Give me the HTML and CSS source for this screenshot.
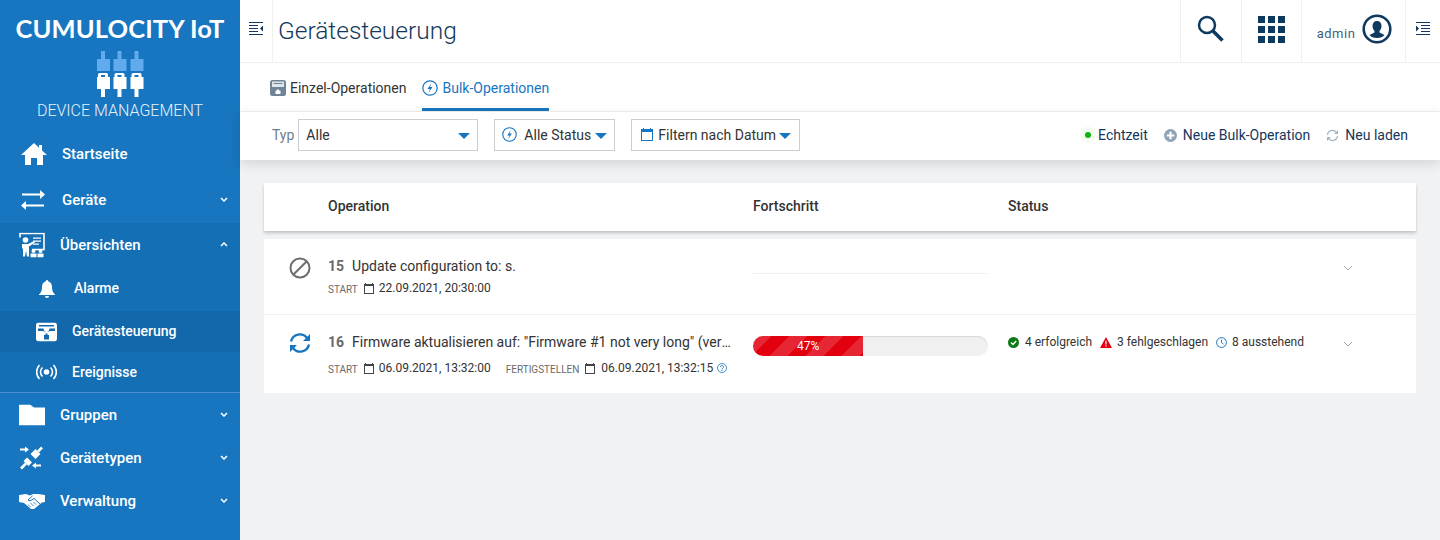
FILE: index.html
```html
<!DOCTYPE html>
<html lang="en">
<head>
    <meta charset="UTF-8">
    <title>Gerätesteuerung</title>
    <link rel="stylesheet" href="styles.css">
</head>
<body>
    <aside class="sidebar">
        <div class="brand">
            <div class="brand-name">CUMULOCITY IoT</div>
            <svg class="brand-icon" width="48" height="48" viewBox="0 0 48 48">
                <defs>
                    <g id="plug">
                        <path fill="#5fabee" d="M5 1h4v8h5v12H1V9h4z"/>
                        <path fill="#fff" fill-rule="evenodd" d="M3.500 23h7a1.500 1.500 0 0 1 1.500 1.500V27h2v12H9v8H5v-8H1V27h1v-2.500A1.500 1.500 0 0 1 3.500 23zM5 25v2h4v-2z"/>
                    </g>
                </defs>
                <use href="#plug"/>
                <use href="#plug" x="16.500"/>
                <use href="#plug" x="33.500"/>
            </svg>
            <div class="brand-sub">DEVICE MANAGEMENT</div>
        </div>
        <nav class="nav">
            <a class="nav-item nav-home">
                <svg class="nav-icon" width="26" height="24" viewBox="0 0 26 24"><path fill="#fff" d="M13 1 0 13h4v10h6v-7h6v7h6V13h4l-5-4.600V3h-3v2.800z"/></svg>
                <span>Startseite</span>
            </a>
            <a class="nav-item nav-home nav-devices">
                <svg class="nav-icon" width="24" height="21" viewBox="0 0 24 21"><path fill="#fff" d="M1 4h18V.500L24 5l-5 4.500V6H1zM23 15H5v-3.500L0 16l5 4.500V17h18z"/></svg>
                <span>Geräte</span>
                <svg class="chev" width="8" height="5" viewBox="0 0 8 5"><path fill="none" stroke="#fff" stroke-width="1.500" d="m1 1 3 3 3-3"/></svg>
            </a>
            <div class="nav-open">
                <a class="nav-item nav-head">
                    <svg class="nav-icon" width="26" height="25" viewBox="0 0 26 25"><path fill="none" stroke="#fff" stroke-width="1.600" d="M1 5V1h24v16H13"/><path fill="#fff" d="M14 5h8v1.200h-8zM14 8h8v1.200h-8zM14 11h6v1.200h-6z"/><circle cx="6.500" cy="7.500" r="2.800" fill="#fff"/><path fill="#fff" d="M3 11.500h6l6-3 1 1.500-6 4v10H8l-1-6-1 6H4v-8H3z"/><circle cx="14.500" cy="18.500" r="2" fill="#fff"/><circle cx="21.500" cy="18.500" r="2" fill="#fff"/><path fill="#fff" d="M11.500 21h6v4h-6zM18.500 21h6v4h-6z"/></svg>
                    <span>Übersichten</span>
                    <svg class="chev" width="8" height="5" viewBox="0 0 8 5"><path fill="none" stroke="#fff" stroke-width="1.500" d="m1 4 3-3 3 3"/></svg>
                </a>
                <a class="nav-sub nav-alarm">
                    <svg class="sub-icon" width="16" height="18" viewBox="0 0 16 18"><path fill="#fff" d="M8 0a1.500 1.500 0 0 1 1.400 1.500C12 2.300 13 4.500 13 7c0 4 1 5.500 3 7.500V15H0v-.5C2 12.500 3 11 3 7c0-2.500 1-4.700 3.600-5.500A1.500 1.500 0 0 1 8 0zM6 16h4a2 2 0 0 1-4 0z"/></svg>
                    <span>Alarme</span>
                </a>
                <a class="nav-sub nav-active">
                    <svg class="sub-icon" width="21" height="19" viewBox="0 0 21 19"><rect width="21" height="19" rx="3" fill="#fff"/><path fill="#1268ab" d="M3 2.500h15V4H3zM2 6h5.500a3 3 0 0 0 6 0H19v2.500h-5l-1 .5H8l-1-.5H2zM8 12.500h1.500v-1.500h2v1.500H13V17H8z"/></svg>
                    <span>Gerätesteuerung</span>
                </a>
                <a class="nav-sub nav-last">
                    <svg class="sub-icon" width="21" height="16" viewBox="0 0 21 16"><circle cx="10.500" cy="8" r="2.800" fill="#fff"/><g fill="none" stroke="#fff" stroke-width="1.600"><path d="M6.500 3.500a6 6 0 0 0 0 9M14.500 3.500a6 6 0 0 1 0 9M3.500 1a10 10 0 0 0 0 14M17.500 1a10 10 0 0 1 0 14"/></g></svg>
                    <span>Ereignisse</span>
                </a>
            </div>
            <a class="nav-item nav-head">
                <svg class="nav-icon" width="26" height="21" viewBox="0 0 26 21"><path fill="#fff" d="M0 0h11l4 3h11v18H0z"/></svg>
                <span>Gruppen</span>
                <svg class="chev" width="8" height="5" viewBox="0 0 8 5"><path fill="none" stroke="#fff" stroke-width="1.500" d="m1 1 3 3 3-3"/></svg>
            </a>
            <a class="nav-item nav-head">
                <svg class="nav-icon" width="25" height="25" viewBox="0 0 25 25"><g fill="none" stroke="#fff"><path stroke-width="7" d="M14 11l5-5M11 14l-4 4"/><path stroke-width="2.500" d="m19 6 4-4M7 18l-5 5"/><path stroke="#1776bf" stroke-width="1.200" d="m7 10 8 8"/></g><path fill="#fff" d="M1 3h5V1l4 3-4 3V5H1zM22 19h-5v-2l-4 3 4 3v-2h5z"/></svg>
                <span>Gerätetypen</span>
                <svg class="chev" width="8" height="5" viewBox="0 0 8 5"><path fill="none" stroke="#fff" stroke-width="1.500" d="m1 1 3 3 3-3"/></svg>
            </a>
            <a class="nav-item nav-head">
                <svg class="nav-icon" width="26" height="16" viewBox="0 0 26 16"><path fill="#fff" d="M0 2l7-1 4 1.500L14 1h5l7 1v7l-3 .5L15 16h-3L5 10l-5-1z"/><g fill="none" stroke="#1776bf"><path d="M13.500 3 9 7l2 1 4-2.500 6 5.500"/><path d="m9 11.500 2.500 2.500M11.500 10l3 3M14.500 9l2.500 2.500" stroke-width=".8"/></g></svg>
                <span>Verwaltung</span>
                <svg class="chev" width="8" height="5" viewBox="0 0 8 5"><path fill="none" stroke="#fff" stroke-width="1.500" d="m1 1 3 3 3-3"/></svg>
            </a>
        </nav>
    </aside>

    <main class="main">
        <header class="topbar">
            <div class="toggle toggle-left">
                <svg width="14" height="13" viewBox="0 0 14 13"><path fill="#14375b" d="M0 0h14v1H0zM0 3h9v1H0zM0 6h9v1H0zM0 9h9v1H0zM0 12h14v1H0zM14 3.500v6l-3-3z"/></svg>
            </div>
            <h1 class="title">Gerätesteuerung</h1>
            <div class="top-cell top-search">
                <svg width="27" height="27" viewBox="0 0 27 27"><circle cx="10" cy="10" r="8" fill="none" stroke="#0f3a5f" stroke-width="2.500"/><path stroke="#0f3a5f" stroke-width="3.500" d="m15.500 15.500 10 10"/></svg>
            </div>
            <div class="top-cell top-apps">
                <svg width="27" height="27" viewBox="0 0 27 27"><path fill="#0f3a5f" d="M0 0h7v7H0zM10 0h7v7h-7zM20 0h7v7h-7zM0 10h7v7H0zM10 10h7v7h-7zM20 10h7v7h-7zM0 20h7v7H0zM10 20h7v7h-7zM20 20h7v7h-7z"/></svg>
            </div>
            <div class="top-cell top-user">
                <span class="user-name">admin</span>
                <svg width="30" height="30" viewBox="0 0 30 30"><circle cx="15" cy="15" r="13.300" fill="none" stroke="#0f3a5f" stroke-width="2.600"/><path fill="#0f3a5f" d="M15 7c3 0 4.500 2 4.500 5 0 2-1 4-2 5v1.500l5 2.500c-1.500 2-4 3-7.500 3s-6-1-7.500-3l5-2.500V17c-1-1-2-3-2-5 0-3 1.500-5 4.500-5z"/></svg>
            </div>
            <div class="toggle toggle-right">
                <svg width="14" height="13" viewBox="0 0 14 13"><path fill="#14375b" d="M0 0h14v1H0zM5 3h9v1H5zM5 6h9v1H5zM5 9h9v1H5zM0 12h14v1H0zM0 3.500v6l3-3z"/></svg>
            </div>
        </header>

        <div class="tabs">
            <a class="tab">
                <svg width="16" height="16" viewBox="0 0 16 16"><rect width="16" height="16" rx="2.500" fill="#6f8496"/><path fill="#dfe5ea" d="M2 1.500h12V7H2z"/><path fill="#6f8496" d="M3.500 3h9v1h-9z"/><path fill="#6f8496" d="M5 7a3 3 0 0 0 6 0z"/><path fill="#fff" d="M5.500 10.500h1.500V9.500h2v1h1.500V14h-5z"/></svg>
                Einzel-Operationen
            </a>
            <a class="tab tab-active">
                <svg width="16" height="16" viewBox="0 0 16 16"><circle cx="8" cy="8" r="7.200" fill="none" stroke="#1776bf" stroke-width="1.200"/><path fill="#1776bf" d="m9.500 3-4 6h2.500l-1.500 4 4-6H8z"/></svg>
                Bulk-Operationen
            </a>
        </div>

        <div class="actionbar">
            <label class="type-label">Typ</label>
            <div class="select select-type">
                <span>Alle</span>
                <i class="caret"></i>
            </div>
            <div class="select select-status">
                <svg width="15" height="15" viewBox="0 0 16 16"><circle cx="8" cy="8" r="7.200" fill="none" stroke="#1776bf" stroke-width="1.200"/><path fill="#1776bf" d="m9.500 3-4 6h2.500l-1.500 4 4-6H8z"/></svg>
                <span>Alle Status</span>
                <i class="caret"></i>
            </div>
            <div class="select select-date">
                <svg width="12" height="13" viewBox="0 0 12 13"><path fill="#1776bf" fill-rule="evenodd" d="M2 0h1v1h6V0h1v1h2v12H0V1h2zM1 4v8h10V4z"/></svg>
                <span>Filtern nach Datum</span>
                <i class="caret"></i>
            </div>
            <div class="actions">
                <span class="action"><i class="live-dot"></i>Echtzeit</span>
                <span class="action">
                    <svg width="13" height="13" viewBox="0 0 12 12"><circle cx="6" cy="6" r="6" fill="#8fa3b5"/><path fill="#fff" d="M5 2.500h2V5h2.500v2H7v2.500H5V7H2.500V5H5z"/></svg>
                    Neue Bulk-Operation
                </span>
                <span class="action">
                    <svg width="13" height="13" viewBox="0 0 13 13"><path fill="none" stroke="#a5b4c0" stroke-width="1.200" d="M1.500 6A5 5 0 0 1 10.500 3.500M11.500 7A5 5 0 0 1 2.500 9.500"/><path fill="#a5b4c0" d="M12 1v4H8zM1 12V8h4z"/></svg>
                    Neu laden
                </span>
            </div>
        </div>

        <div class="content">
            <div class="table-head">
                <div class="col-op">Operation</div>
                <div class="col-progress">Fortschritt</div>
                <div class="col-status">Status</div>
            </div>
            <div class="rows">
                <div class="row row-first">
                    <svg class="row-icon" width="22" height="22" viewBox="0 0 22 22"><circle cx="11" cy="11" r="9.500" fill="none" stroke="#6d6d6d" stroke-width="2"/><path stroke="#6d6d6d" stroke-width="2" d="M4.500 17.500l13-13"/></svg>
                    <div class="col-op">
                        <div class="op-title"><b>15</b>Update configuration to: s.</div>
                        <div class="op-meta">
                            <small>START</small>
                            <svg class="cal" width="10" height="11" viewBox="0 0 10 11"><path fill="#444" fill-rule="evenodd" d="M1 0h1v1h6V0h1v1h1v10H0V1h1zM1 3v7h8V3z"/></svg>
                            <span>22.09.2021, 20:30:00</span>
                        </div>
                    </div>
                    <div class="col-progress"><div class="progress-empty"></div></div>
                    <div class="col-status"></div>
                    <svg class="row-chev" width="10" height="6" viewBox="0 0 10 6"><path fill="none" stroke="#98a8b6" d="m1 1 4 4 4-4"/></svg>
                </div>
                <div class="row row-second">
                    <svg class="row-icon" width="22" height="20" viewBox="0 0 22 20"><g fill="none" stroke="#1776bf" stroke-width="2.400"><path d="M2 8.500A9 9 0 0 1 18 5"/><path d="M20 11.500A9 9 0 0 1 4 15"/></g><path fill="#1776bf" d="M21 1v7h-7zM1 19v-7h7z"/></svg>
                    <div class="col-op">
                        <div class="op-title"><b>16</b><span class="op-name">Firmware aktualisieren auf: "Firmware #1 not very long" (version: 1.0.0)</span></div>
                        <div class="op-meta">
                            <small>START</small>
                            <svg class="cal" width="10" height="11" viewBox="0 0 10 11"><path fill="#444" fill-rule="evenodd" d="M1 0h1v1h6V0h1v1h1v10H0V1h1zM1 3v7h8V3z"/></svg>
                            <span>06.09.2021, 13:32:00</span>
                            <small class="meta-end">FERTIGSTELLEN</small>
                            <svg class="cal" width="10" height="11" viewBox="0 0 10 11"><path fill="#444" fill-rule="evenodd" d="M1 0h1v1h6V0h1v1h1v10H0V1h1zM1 3v7h8V3z"/></svg>
                            <span>06.09.2021, 13:32:15</span>
                            <svg class="help" width="10" height="10" viewBox="0 0 10 10"><circle cx="5" cy="5" r="4.500" fill="none" stroke="#1776bf" stroke-width=".8"/><path fill="none" stroke="#1776bf" stroke-width=".9" d="M3.500 4a1.500 1.500 0 1 1 2.200 1.300C5.200 5.600 5 5.800 5 6.500"/><circle cx="5" cy="7.600" r=".6" fill="#1776bf"/></svg>
                        </div>
                    </div>
                    <div class="col-progress">
                        <div class="progress">
                            <div class="progress-bar" style="width: 47%">47%</div>
                        </div>
                    </div>
                    <div class="col-status status-list">
                        <span class="stat stat-ok">
                            <svg width="11" height="11" viewBox="0 0 11 11"><circle cx="5.500" cy="5.500" r="5.500" fill="#0b7a16"/><path fill="none" stroke="#fff" stroke-width="1.400" d="m3 5.500 2 2 3.200-3.500"/></svg>
                            4 erfolgreich
                        </span>
                        <span class="stat">
                            <svg width="12" height="11" viewBox="0 0 12 11"><path fill="#e2000f" d="M6 0l6 11H0z"/><path fill="#fff" d="M5.400 3.800h1.200v3.800H5.400zM5.400 8.300h1.200v1.200H5.400z"/></svg>
                            3 fehlgeschlagen
                        </span>
                        <span class="stat">
                            <svg width="11" height="11" viewBox="0 0 11 11"><circle cx="5.500" cy="5.500" r="4.900" fill="none" stroke="#1776bf"/><path fill="none" stroke="#1776bf" stroke-width=".9" d="M5.500 2.500v3.200l2 1.300"/></svg>
                            8 ausstehend
                        </span>
                    </div>
                    <svg class="row-chev" width="10" height="6" viewBox="0 0 10 6"><path fill="none" stroke="#98a8b6" d="m1 1 4 4 4-4"/></svg>
                </div>
            </div>
        </div>
    </main>
</body>
</html>
```

FILE: styles.css
```css
* {
    box-sizing: border-box;
}

body {
    margin: 0;
    height: 540px;
    display: flex;
    overflow: hidden;
    font-family: Roboto, "Liberation Sans", sans-serif;
    font-size: 14px;
    color: #333;
    background-color: #f1f2f4;
}

/* sidebar */
.sidebar {
    width: 240px;
    flex: none;
    background-color: #1776bf;
    color: #fff;
}

.brand {
    height: 131px;
    display: flex;
    flex-direction: column;
    align-items: center;
    padding-top: 13px;
}

.brand-name {
    font-family: Lato, sans-serif;
    font-weight: 700;
    font-size: 25.5px;
    line-height: 30px;
    letter-spacing: 0.1px;
    white-space: nowrap;
}

.brand-icon {
    margin-top: 7px;
}

.brand-sub {
    margin-top: 3px;
    font-size: 16px;
    font-weight: 300;
    line-height: 20px;
    color: #e6f2fb;
}

.nav-item {
    display: flex;
    align-items: center;
    font-size: 15px;
    font-weight: 500;
    position: relative;
}

.nav-home {
    height: 45px;
    padding-left: 62px;
}

.nav-home .nav-icon {
    position: absolute;
    left: 21px;
    top: 50%;
    transform: translateY(-50%);
}

.nav-devices {
    height: 47px;
}

.nav-head {
    height: 43px;
    padding-left: 60px;
}

.nav-head .nav-icon {
    position: absolute;
    left: 19px;
    top: 50%;
    transform: translateY(-50%);
}

.chev {
    position: absolute;
    right: 12px;
    top: 50%;
    margin-top: -3px;
}

.nav-open {
    background-color: #146fb5;
    border-bottom: 1px solid #4a90cc;
}

.nav-sub {
    height: 41px;
    display: flex;
    align-items: center;
    padding-left: 72px;
    padding-bottom: 1px;
    font-size: 14px;
    font-weight: 500;
    position: relative;
}

.nav-alarm {
    height: 45px;
    padding-left: 74px;
}

.nav-last {
    height: 40px;
    padding-bottom: 0;
}

.nav-active {
    background-color: #1268ab;
}

.sub-icon {
    position: absolute;
    left: 36px;
    top: 50%;
    transform: translateY(-50%);
}

.nav-alarm .sub-icon {
    left: 39px;
}

/* top bar */
.main {
    flex: 1;
    min-width: 0;
    display: flex;
    flex-direction: column;
}

.topbar {
    height: 63px;
    flex: none;
    display: flex;
    align-items: stretch;
    background-color: #fff;
    border-bottom: 1px solid #f0f0f0;
}

.toggle {
    width: 33px;
    display: flex;
    align-items: center;
    justify-content: center;
}

.toggle-left {
    border-right: 1px solid #f0f0f0;
    padding-right: 1px;
    padding-bottom: 5px;
}

.toggle-right {
    width: 34px;
    padding-bottom: 6px;
}

.title {
    flex: 1;
    margin: 0;
    padding-left: 5px;
    font-size: 24.5px;
    font-weight: 300;
    line-height: 61px;
    color: #14375b;
}

.top-cell {
    display: flex;
    align-items: center;
    justify-content: center;
    border-left: 1px solid #f0f0f0;
}

.top-search {
    width: 61px;
    padding-bottom: 5px;
    padding-right: 2px;
}

.top-apps {
    width: 60px;
    padding-bottom: 4px;
}

.top-user {
    width: 105px;
    gap: 7px;
    border-right: 1px solid #f0f0f0;
    padding-bottom: 4px;
    padding-left: 2px;
}

.user-name {
    font-size: 13px;
    letter-spacing: 0.5px;
    color: #3f5f7d;
    padding-top: 8px;
}

/* tabs */
.tabs {
    height: 49px;
    flex: none;
    display: flex;
    gap: 16px;
    padding-left: 30px;
    background-color: #fff;
    border-bottom: 1px solid #f0f0f0;
}

.tab {
    display: flex;
    align-items: center;
    gap: 4px;
    height: 48px;
    padding-top: 2px;
    font-size: 14px;
    color: #333;
}

.tab-active {
    color: #1776bf;
    border-bottom: 3px solid #1776bf;
    padding-top: 5px;
}

/* filters */
.actionbar {
    height: 48px;
    flex: none;
    display: flex;
    align-items: center;
    padding-left: 32px;
    padding-bottom: 2px;
    background-color: #fff;
    box-shadow: 0 4px 12px rgba(0, 0, 0, 0.12);
    position: relative;
    z-index: 1;
}

.type-label {
    color: #6f7f8c;
    margin-right: 4px;
}

.select {
    height: 32px;
    display: flex;
    align-items: center;
    border: 1px solid #c9ced3;
    padding-bottom: 1px;
    color: #333;
    font-size: 14px;
    margin-right: 16px;
}

.select-type {
    width: 180px;
    padding-left: 7px;
    padding-right: 7px;
    justify-content: space-between;
}

.select-status {
    width: 121px;
    padding-left: 7px;
    gap: 7px;
}

.select-date {
    width: 169px;
    padding-left: 9px;
    gap: 5px;
}

.caret {
    width: 0;
    height: 0;
    margin-top: 3px;
    border-left: 6px solid transparent;
    border-right: 6px solid transparent;
    border-top: 6px solid #1776bf;
}

.select-status .caret {
    margin-left: -3px;
}

.select-date .caret {
    margin-left: -2px;
}

.actions {
    margin-left: auto;
    padding-right: 32px;
    display: flex;
    gap: 16px;
    color: #14375b;
    font-size: 14px;
}

.action {
    display: flex;
    align-items: center;
    gap: 6px;
}

.live-dot {
    width: 6px;
    height: 6px;
    border-radius: 50%;
    background-color: #0fb40f;
    box-shadow: 0 0 0 5px rgba(15, 180, 15, 0.05);
    margin-right: 1px;
}

/* table */
.content {
    padding: 23px 24px 0;
}

.table-head {
    height: 48px;
    display: flex;
    align-items: center;
    padding-left: 64px;
    padding-bottom: 2px;
    background-color: #fff;
    font-size: 14px;
    font-weight: 500;
    box-shadow: 0 2px 3px rgba(0, 0, 0, 0.2);
}

.col-op {
    width: 425px;
    flex: none;
}

.col-progress {
    width: 255px;
    flex: none;
}

.col-status {
    flex: 1;
}

.rows {
    margin-top: 8px;
    background-color: #fff;
}

.row {
    display: flex;
    position: relative;
    padding-left: 64px;
}

.row-first {
    height: 76px;
    padding-top: 18px;
    border-bottom: 1px solid #f0f0f0;
}

.row-second {
    height: 78px;
    padding-top: 18px;
}

.row-icon {
    position: absolute;
    left: 25px;
    top: 18px;
}

.op-title {
    display: flex;
    font-size: 14px;
    line-height: 18px;
    white-space: nowrap;
}

.op-title b {
    font-weight: 700;
    font-size: 14px;
    color: #6a6a6a;
    margin-right: 8px;
}

.op-name {
    width: 379px;
    overflow: hidden;
    text-overflow: ellipsis;
}

.op-meta {
    display: flex;
    align-items: center;
    margin-top: 5px;
    height: 16px;
    font-size: 12px;
    color: #333;
    white-space: nowrap;
}

.row-second .op-meta {
    margin-top: 9px;
}

.op-meta small {
    font-size: 10px;
    color: #6a6a6a;
    margin-right: 6px;
    padding-top: 3px;
}

.op-meta .meta-end {
    margin-left: 15px;
}

.cal {
    margin-right: 5px;
}

.meta-end + .cal {
    margin-right: 6px;
}

.help {
    margin-left: 4px;
}

.progress-empty {
    height: 1px;
    width: 235px;
    margin-top: 16px;
    background-color: #f0f0f0;
}

.progress {
    width: 235px;
    height: 20px;
    margin-top: 3px;
    border-radius: 10px;
    overflow: hidden;
    background-color: #f0f0f0;
    box-shadow: inset 0 1px 1px rgba(0, 0, 0, 0.1);
}

.progress-bar {
    height: 100%;
    text-align: center;
    font-size: 12px;
    line-height: 20px;
    color: #fff;
    background-color: #e2000f;
    background-image: linear-gradient(135deg, rgba(255, 255, 255, 0.15) 25%, transparent 25%, transparent 50%, rgba(255, 255, 255, 0.15) 50%, rgba(255, 255, 255, 0.15) 75%, transparent 75%);
    background-size: 36px 36px;
}

.status-list {
    display: flex;
    gap: 8px;
    font-size: 12px;
    line-height: 18px;
}

.stat {
    display: flex;
    align-items: center;
    height: 18px;
    gap: 5px;
    white-space: nowrap;
}

.stat-ok {
    gap: 6px;
}

.row-chev {
    position: absolute;
    left: 1079px;
    top: 26px;
}
```
